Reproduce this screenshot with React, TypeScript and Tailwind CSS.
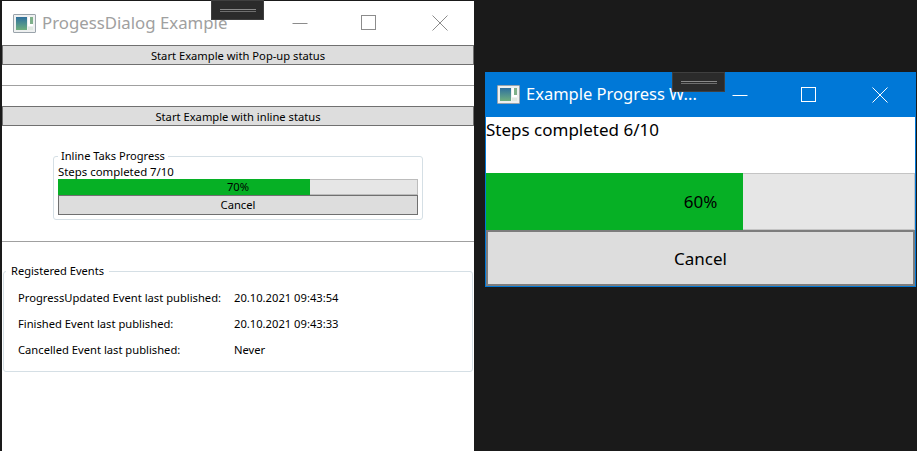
const font = "[font-family:'Noto_Sans',sans-serif]";

function AppIcon() {
  return (
    <div className="w-[23px] h-[19px] shrink-0 border border-[#9aa3ab] bg-[#eef0f0] p-[2px] flex gap-[1px] rounded-[1px]">
      <div className="w-[11px] h-full bg-gradient-to-b from-[#2f6f9c] to-[#6fae7c]" />
      <div className="flex-1 flex flex-col gap-[1px]">
        <div className="h-[9px] bg-[#ffffff] flex justify-end">
          <div className="w-[3px] h-[7px] bg-[#7fb08a]" />
        </div>
        <div className="flex-1 bg-[#dfe8e0]" />
      </div>
    </div>
  );
}

function Minimize({ color }: { color: string }) {
  return (
    <svg width="16" height="16" viewBox="0 0 16 16" fill="none" stroke={color} strokeWidth="1">
      <path d="M0.5 8.5h15" />
    </svg>
  );
}

function Maximize({ color }: { color: string }) {
  return (
    <svg className="-ml-[1px] mr-[1px]" width="16" height="16" viewBox="0 0 16 16" fill="none" stroke={color} strokeWidth="1">
      <rect x="0.5" y="0.5" width="14" height="14" />
    </svg>
  );
}

function Close({ color }: { color: string }) {
  return (
    <svg width="16" height="16" viewBox="0 0 16 16" fill="none" stroke={color} strokeWidth="1">
      <path d="M0.5 0.5l15 15M15.5 0.5l-15 15" />
    </svg>
  );
}

function SnapHandle() {
  return (
    <div className="absolute w-[53px] h-[20px] bg-[#2b2b2b] border border-[#3f3f3f] flex flex-col items-center justify-center gap-[1px]">
      <div className="w-[36px] h-[1px] bg-[#8a8a8a]" />
      <div className="w-[36px] h-[1px] bg-[#6f6f6f]" />
    </div>
  );
}

function Row({ label, value }: { label: string; value: string }) {
  return (
    <div className="h-[26px] flex items-center text-[11.2px] text-black whitespace-nowrap">
      <span className="w-[230px] pl-[14px] shrink-0">{label}</span>
      <span>{value}</span>
    </div>
  );
}

export default function App() {
  return (
    <div className={`w-[917px] h-[451px] bg-[#1a1a1a] flex items-start overflow-hidden relative ${font}`}>
      {/* main window */}
      <div className="w-[472px] h-[450px] ml-[2px] mt-[1px] bg-white flex flex-col shrink-0">
        <div className="h-[44px] shrink-0 flex items-center pl-[11px]">
          <AppIcon />
          <span className="ml-[6px] text-[16.8px] text-[#a0a0a0] whitespace-nowrap">ProgessDialog Example</span>
          <div className="ml-auto flex items-center gap-[54px] pr-[26px]">
            <Minimize color="#8c8c8c" />
            <Maximize color="#8c8c8c" />
            <Close color="#8c8c8c" />
          </div>
        </div>
        <button className="h-[20px] shrink-0 bg-[#dddddd] border border-[#707070] pt-[1px] text-[11.2px] text-black leading-none">
          Start Example with Pop-up status
        </button>
        <div className="h-[21px] shrink-0 border-b border-[#a0a0a0]" />
        <div className="h-[20px] shrink-0" />
        <button className="h-[20px] shrink-0 bg-[#dddddd] border border-[#707070] pt-[1px] text-[11.2px] text-black leading-none">
          Start Example with inline status
        </button>

        <fieldset className="mx-[51px] mt-[23px] w-[370px] h-[71px] border border-[#d5dfe5] rounded-[3px] px-[4px] pb-[3px] shrink-0">
          <legend className="px-[3px] text-[11.1px] text-black leading-[14px]">Inline Taks Progress</legend>
          <div className="h-[16px] pt-[1px] text-[11.4px] text-black leading-[16px] whitespace-nowrap">Steps completed 7/10</div>
          <div className="relative h-[16px] bg-[#e6e6e6] border border-[#bcbcbc]">
            <div className="absolute -left-[1px] -top-[1px] -bottom-[1px] w-[252px] bg-[#06b025]" />
            <div className="absolute inset-0 flex items-center justify-center text-[11.2px] text-black leading-none">70%</div>
          </div>
          <button className="w-full h-[20px] block bg-[#dddddd] border border-[#707070] text-[11.2px] text-black leading-none">
            Cancel
          </button>
        </fieldset>

        <div className="h-[1px] shrink-0 bg-[#a0a0a0] mt-[21px]" />

        <fieldset className="mx-[1px] mt-[22px] w-[470px] h-[108px] border border-[#d5dfe5] rounded-[3px] shrink-0 pt-[7px]">
          <legend className="ml-[2px] px-[5px] text-[11.1px] text-black leading-[14px]">Registered Events</legend>
          <Row label="ProgressUpdated Event last published:" value="20.10.2021 09:43:54" />
          <Row label="Finished Event last published:" value="20.10.2021 09:43:33" />
          <Row label="Cancelled Event last published:" value="Never" />
        </fieldset>
      </div>

      {/* progress popup */}
      <div className="w-[431px] h-[215px] ml-[11px] mt-[72px] border border-[#0078d7] border-t-0 bg-white flex flex-col shrink-0">
        <div className="h-[45px] shrink-0 bg-[#0078d7] flex items-center pl-[12px] -mx-[1px]">
          <AppIcon />
          <span className="ml-[6px] text-[16.5px] text-white whitespace-nowrap">Example Progress W...</span>
          <div className="ml-auto flex items-center gap-[54px] pr-[28px]">
            <Minimize color="#ffffff" />
            <Maximize color="#ffffff" />
            <Close color="#ffffff" />
          </div>
        </div>
        <div className="h-[56px] shrink-0 text-[17px] text-black leading-[26px] whitespace-nowrap">Steps completed 6/10</div>
        <div className="relative h-[57px] shrink-0 bg-[#e6e6e6] border border-[#c4c4c4]">
          <div className="absolute -left-[1px] -top-[1px] -bottom-[1px] w-[257px] bg-[#06b025]" />
          <div className="absolute inset-0 flex items-center justify-center text-[17px] text-black leading-none">60%</div>
        </div>
        <button className="flex-1 bg-[#dddddd] border-2 border-[#7d7d7d] text-[17px] text-black leading-none">Cancel</button>
      </div>

      {/* window snap handles */}
      <div className="absolute left-[211px] top-0">
        <SnapHandle />
      </div>
      <div className="absolute left-[672px] top-[72px]">
        <SnapHandle />
      </div>
    </div>
  );
}
